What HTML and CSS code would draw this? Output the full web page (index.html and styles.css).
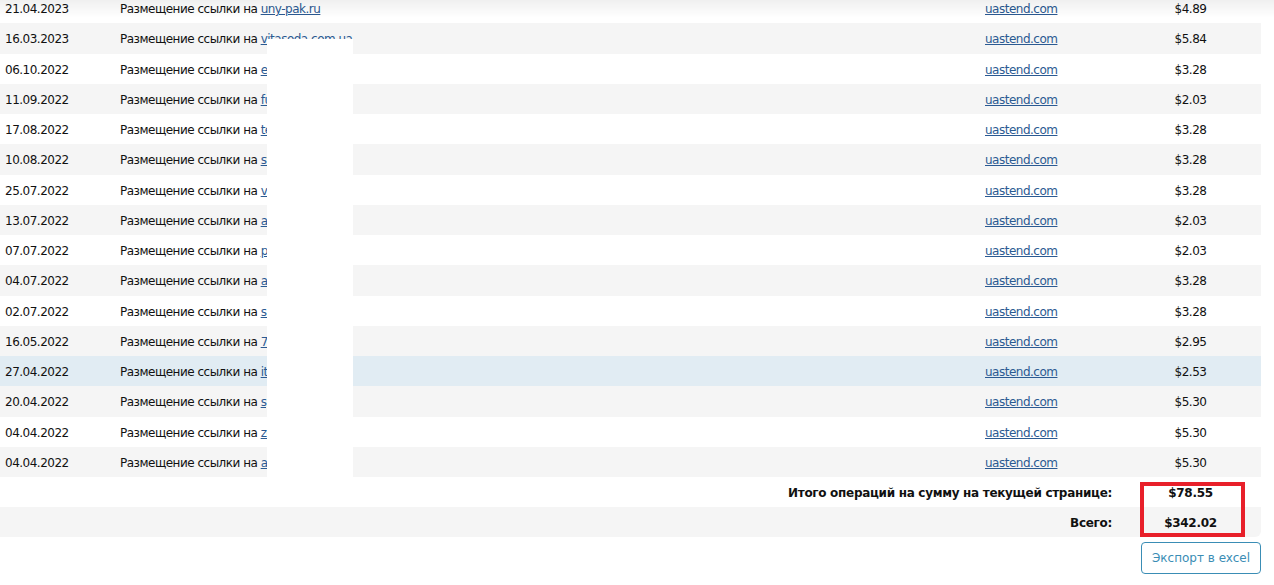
FILE: index.html
```html
<!DOCTYPE html>
<html>
<head>
	<meta charset="UTF-8">
	<title>История операций</title>
	<link rel="stylesheet" href="styles.css">
</head>
<body>
	<div class="top-shadow"></div>
	<div class="wrap">
		<table class="ops">
			<colgroup>
				<col class="c-date">
				<col class="c-desc">
				<col class="c-site">
				<col class="c-sum">
			</colgroup>
			<tr><td>21.04.2023</td><td>Размещение ссылки на <a href="javascript:;">uny-pak.ru</a></td><td><a href="javascript:;">uastend.com</a></td><td class="sum">$4.89</td></tr>
			<tr><td>16.03.2023</td><td>Размещение ссылки на <a href="javascript:;">vitasoda.com.ua</a></td><td><a href="javascript:;">uastend.com</a></td><td class="sum">$5.84</td></tr>
			<tr><td>06.10.2022</td><td>Размещение ссылки на <a href="javascript:;">elit.ua</a></td><td><a href="javascript:;">uastend.com</a></td><td class="sum">$3.28</td></tr>
			<tr><td>11.09.2022</td><td>Размещение ссылки на <a href="javascript:;">fundo.ua</a></td><td><a href="javascript:;">uastend.com</a></td><td class="sum">$2.03</td></tr>
			<tr><td>17.08.2022</td><td>Размещение ссылки на <a href="javascript:;">teplo.ua</a></td><td><a href="javascript:;">uastend.com</a></td><td class="sum">$3.28</td></tr>
			<tr><td>10.08.2022</td><td>Размещение ссылки на <a href="javascript:;">stroy.ua</a></td><td><a href="javascript:;">uastend.com</a></td><td class="sum">$3.28</td></tr>
			<tr><td>25.07.2022</td><td>Размещение ссылки на <a href="javascript:;">vikna.ua</a></td><td><a href="javascript:;">uastend.com</a></td><td class="sum">$3.28</td></tr>
			<tr><td>13.07.2022</td><td>Размещение ссылки на <a href="javascript:;">avto.ua</a></td><td><a href="javascript:;">uastend.com</a></td><td class="sum">$2.03</td></tr>
			<tr><td>07.07.2022</td><td>Размещение ссылки на <a href="javascript:;">print.ua</a></td><td><a href="javascript:;">uastend.com</a></td><td class="sum">$2.03</td></tr>
			<tr><td>04.07.2022</td><td>Размещение ссылки на <a href="javascript:;">agro.ua</a></td><td><a href="javascript:;">uastend.com</a></td><td class="sum">$3.28</td></tr>
			<tr><td>02.07.2022</td><td>Размещение ссылки на <a href="javascript:;">santeh.ua</a></td><td><a href="javascript:;">uastend.com</a></td><td class="sum">$3.28</td></tr>
			<tr><td>16.05.2022</td><td>Размещение ссылки на <a href="javascript:;">7kvar.ua</a></td><td><a href="javascript:;">uastend.com</a></td><td class="sum">$2.95</td></tr>
			<tr class="hover"><td>27.04.2022</td><td>Размещение ссылки на <a href="javascript:;">itnews.ua</a></td><td><a href="javascript:;">uastend.com</a></td><td class="sum">$2.53</td></tr>
			<tr><td>20.04.2022</td><td>Размещение ссылки на <a href="javascript:;">sport.ua</a></td><td><a href="javascript:;">uastend.com</a></td><td class="sum">$5.30</td></tr>
			<tr><td>04.04.2022</td><td>Размещение ссылки на <a href="javascript:;">zoo.ua</a></td><td><a href="javascript:;">uastend.com</a></td><td class="sum">$5.30</td></tr>
			<tr><td>04.04.2022</td><td>Размещение ссылки на <a href="javascript:;">aqua.ua</a></td><td><a href="javascript:;">uastend.com</a></td><td class="sum">$5.30</td></tr>
			<tr class="total"><td colspan="3" class="label">Итого операций на сумму на текущей странице:</td><td class="sum">$78.55</td></tr>
			<tr class="total last"><td colspan="3" class="label">Всего:</td><td class="sum">$342.02</td></tr>
		</table>
		<div class="mask"></div>
		<div class="mark"></div>
	</div>
	<div class="actions">
		<a href="javascript:;" class="btn">Экспорт в excel</a>
	</div>
</body>
</html>
```

FILE: styles.css
```css
*{margin: 0;padding: 0;box-sizing: border-box;}
body{background: #fff;font-family: "DejaVu Sans", Verdana, sans-serif;font-size: 12px;letter-spacing: -0.5px;color: #111;width: 1261px;overflow: hidden;}
.top-shadow{position: fixed;top: 0;left: 0;right: 0;height: 18px;z-index: 5;
	background: linear-gradient(rgba(0,0,0,.06), rgba(0,0,0,0));}
.wrap{position: relative;margin-top: -7px;}
.ops{width: 1261px;border-collapse: collapse;table-layout: fixed;}
.c-date{width: 115px;}
.c-desc{width: 865px;}
.c-site{width: 140px;}
.c-sum{width: 141px;}
.ops tr{height: 30.25px;}
.ops tr:nth-child(even) td{background: #f5f5f5;}
.ops tr.hover td{background: #e1ecf3;}
.ops td{padding: 2px 5px 0;white-space: nowrap;overflow: hidden;vertical-align: middle;}
.ops a{color: #2b5a92;text-decoration: underline;}
.ops .sum{text-align: center;}
.ops tr.total{height: 30px;}
.ops .total td{font-weight: bold;letter-spacing: -0.3px;}
.ops .total .label{text-align: right;padding-right: 8px;}
.ops .last td:last-child{border-bottom-right-radius: 6px;}
.mask{position: absolute;left: 267px;top: 46px;width: 86px;height: 438px;background: #fff;}
.mark{position: absolute;left: 1140px;top: 489px;width: 105px;height: 55px;border: 4px solid #e8202a;}
.actions{display: flex;justify-content: flex-end;padding-top: 5px;}
.btn{display: block;width: 120px;height: 32px;line-height: 30px;text-align: center;border: 1px solid #3a8db5;border-radius: 4px;color: #3a8db5;font-size: 12px;letter-spacing: 0;text-decoration: none;}
```
